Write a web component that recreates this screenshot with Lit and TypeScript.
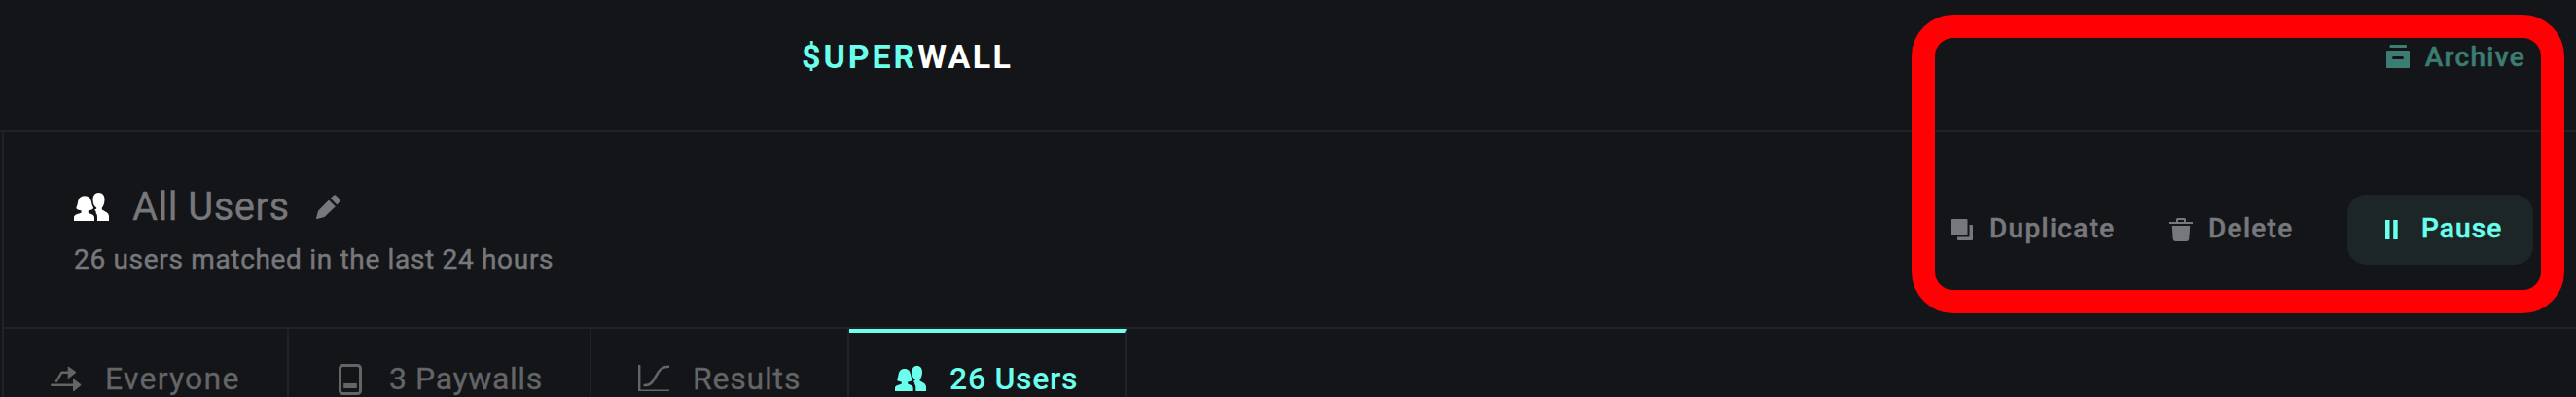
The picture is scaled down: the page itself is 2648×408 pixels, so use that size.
import { LitElement, html, css, svg } from 'lit'
import { customElement, property } from 'lit/decorators.js'

const icons = {
  users: svg`
    <path d="M11 3.2c4.400 0 6.700 3 7.200 7.400.3 2.700 1.800 4.200 1.800 5.200 0 1.500-3.200 2.400-5.200 2.500v2.500c2.700 1.400 6.200 1.900 6.200 4.700V29H0v-3.500c0-3.300 5-3.400 7.600-4.900v-2.300c-2-.1-5.200-1-5.200-2.500 0-1 1.200-2.400 1.500-5.200C4.400 6.200 6.700 3.200 11 3.200z" />
    <path d="M25.500 0c4 0 6 3 6 7.200 0 4-1.400 6.700-2.700 8.300v1.900c2.800 1.700 7.200 3 7.200 6.800V29H24v-4c0-2-.5-3-1.300-3.700v-1.900l-1.500-1.600 2-1.200v-1C21 14 19.500 11.500 19.500 7.200 19.500 3 21.500 0 25.500 0z" />
  `,
  pencil: svg`
    <path d="M13 5.500l6.800 6.800L8.500 23 .8 25q-1 .2-.8-.8l2-7.500z" />
    <path d="M14.800 3.800L17.700.9q1.400-1.400 2.800 0L24 4.600q1.400 1.400 0 2.800l-2.600 3z" />
  `,
  split: svg`
    <path d="M6 15.800L11.500 6.700H19" fill="none" stroke="currentColor" stroke-width="2.400" stroke-linecap="round" stroke-linejoin="round" />
    <path d="M1.200 19.700H24" fill="none" stroke="currentColor" stroke-width="2.400" stroke-linecap="round" />
    <path d="M18.200 1L26 6.500l-7.800 6.300zM23.500 13.700l7.700 6-7.700 6.300z" stroke="currentColor" stroke-width="1" stroke-linejoin="round" />
  `,
  phone: svg`
    <rect x="1.500" y="1.500" width="21" height="29" rx="3" fill="none" stroke="currentColor" stroke-width="3" />
    <rect x="5.200" y="20" width="13.600" height="5" />
  `,
  chart: svg`
    <path d="M1.200 0v26.600H32" fill="none" stroke="currentColor" stroke-width="2.400" />
    <path d="M5.500 21C21 22 15 1.500 32 1.800" fill="none" stroke="currentColor" stroke-width="2.600" />
  `,
  archive: svg`
    <rect x="3.500" width="17.500" height="3" rx="1" />
    <path fill-rule="evenodd" d="M1 6h22q1 0 1 1v16q0 1-1 1H1q-1 0-1-1V7q0-1 1-1zM7.500 12q-1.500 0-1.500 1.500T7.500 15h9q1.500 0 1.500-1.500T16.500 12z" />
  `,
  copy: svg`
    <rect width="16.500" height="16.500" rx="1" />
    <path d="M18.500 6H21q1 0 1 1v14q0 1-1 1H7q-1 0-1-1v-2.500h11.500q1 0 1-1z" />
  `,
  trash: svg`
    <path fill-rule="evenodd" d="M0 4h7V1.500Q7 0 8.500 0h7Q17 0 17 1.500V4h7v2H0zM9 2v2h6V2z" />
    <path d="M2.800 8h18.400l-.9 13.500Q20 24 17.700 24H6.300Q4 24 3.700 21.500z" />
  `,
  pause: svg`<path d="M0 0h4.500v20H0zM8.200 0h4.500v20H8.200z" />`,
}

type IconName = keyof typeof icons

@customElement('sw-icon')
export class SwIcon extends LitElement {
  static styles = css`
    :host {
      display: block;
      flex: none;
    }
    svg {
      display: block;
      width: 100%;
      height: 100%;
      fill: currentColor;
    }
  `

  @property() name: IconName = 'users'
  @property() box = '0 0 36 29'

  render() {
    return html`<svg viewBox=${this.box} aria-hidden="true">
      ${icons[this.name]}
    </svg>`
  }
}

@customElement('app-root')
export class AppRoot extends LitElement {
  static styles = css`
    :host {
      --bg: #141519;
      --line: #202226;
      --fg-mid: #77787b;
      --fg-tab: #646567;
      --accent: #6bffed;
      display: block;
      position: relative;
      box-sizing: border-box;
      height: 408px;
      overflow: hidden;
      background: var(--bg);
      color: var(--fg-mid);
      font-family: Roboto, 'Liberation Sans', sans-serif;
      font-size: 28px;
      font-weight: 500;
      line-height: 1;
      white-space: nowrap;
    }
    .topbar {
      display: flex;
      align-items: center;
      justify-content: space-between;
      box-sizing: border-box;
      height: 136px;
      padding: 0 52px 18px 824px;
      border-bottom: 2px solid var(--line);
    }
    .logo {
      color: #fff;
      font-size: 34px;
      font-weight: 700;
      letter-spacing: 2.3px;
    }
    .logo b {
      font-weight: inherit;
      color: var(--accent);
      letter-spacing: 2.9px;
    }
    .action {
      display: flex;
      align-items: center;
      letter-spacing: 1.1px;
      -webkit-text-stroke: 0.5px;
    }
    .action span {
      margin-top: -3px;
    }
    .archive {
      gap: 16px;
      color: #3b7d73;
      letter-spacing: 1.3px;
    }
    .archive span {
      margin-top: 1px;
    }
    .main {
      margin-left: 2px;
      border-left: 2px solid var(--line);
    }
    .header {
      display: flex;
      justify-content: space-between;
      box-sizing: border-box;
      height: 202px;
      padding: 57px 44px 0 72px;
      border-bottom: 2px solid var(--line);
    }
    .title {
      display: flex;
      align-items: center;
      height: 38px;
      font-size: 40px;
      font-weight: 400;
      -webkit-text-stroke: 0.3px;
    }
    .title-icon {
      color: #fff;
    }
    .name {
      width: 160px;
      margin: 1px 29px 0 24px;
      letter-spacing: 0.45px;
    }
    .subtitle {
      margin-top: 22px;
      font-weight: 400;
      letter-spacing: 0.68px;
      -webkit-text-stroke: 0.5px;
    }
    .actions {
      display: flex;
      align-items: center;
      height: 72px;
      margin-top: 7px;
    }
    .duplicate {
      gap: 17px;
      width: 224px;
      letter-spacing: 1.3px;
    }
    .delete {
      gap: 16px;
      width: 183px;
      letter-spacing: 1.3px;
    }
    .pause {
      box-sizing: border-box;
      gap: 24px;
      width: 191px;
      height: 72px;
      padding-left: 39px;
      border-radius: 19px;
      background: #1c2627;
      color: var(--accent);
    }
    .tabs {
      display: flex;
      height: 70px;
    }
    .tab {
      display: flex;
      box-sizing: border-box;
      padding-top: 36px;
      border-right: 2px solid var(--line);
      color: var(--fg-tab);
      font-size: 32px;
      font-weight: 400;
      -webkit-text-stroke: 0.3px;
    }
    .tab span {
      margin-top: -1px;
    }
    .tab.active {
      padding-top: 32px;
      border-top: 4px solid var(--accent);
      color: var(--accent);
      font-weight: 500;
      letter-spacing: 0.7px;
      -webkit-text-stroke: 0;
    }
    .everyone {
      width: 293px;
      padding-left: 48px;
      gap: 24px;
      letter-spacing: 1.2px;
    }
    .paywalls {
      width: 311px;
      padding-left: 51px;
      gap: 28px;
      letter-spacing: 0.6px;
    }
    .results {
      width: 265px;
      padding-left: 48px;
      gap: 24px;
      letter-spacing: 0.8px;
    }
    .users {
      width: 285px;
      padding-left: 47px;
      gap: 24px;
    }
    .i36 { width: 36px; height: 29px; }
    .i25 { width: 25px; height: 25px; }
    .i24 { width: 24px; height: 24px; }
    .i22 { width: 22px; height: 22px; }
    .i32 { width: 32px; height: 28px; }
    .bars { width: 13px; height: 20px; }
    .device { width: 24px; height: 32px; }
    .small-users { width: 32px; height: 26px; margin-top: 2px; }
    .highlight {
      position: absolute;
      top: 15px;
      left: 1965px;
      box-sizing: border-box;
      width: 671px;
      height: 307px;
      border: 24px solid #ff0004;
      border-radius: 43px;
      pointer-events: none;
    }
  `

  render() {
    return html`
      <div class="topbar">
        <div class="logo"><b>$UPER</b>WALL</div>
        <div class="action archive">
          <sw-icon class="i24" name="archive" box="0 0 24 24"></sw-icon>
          <span>Archive</span>
        </div>
      </div>
      <div class="main">
        <div class="header">
          <div>
            <div class="title">
              <sw-icon class="i36 title-icon" name="users"></sw-icon>
              <span class="name">All Users</span>
              <sw-icon class="i25" name="pencil" box="0 0 25 25"></sw-icon>
            </div>
            <div class="subtitle">26 users matched in the last 24 hours</div>
          </div>
          <div class="actions">
            <div class="action duplicate">
              <sw-icon class="i22" name="copy" box="0 0 22 22"></sw-icon>
              <span>Duplicate</span>
            </div>
            <div class="action delete">
              <sw-icon class="i24" name="trash" box="0 0 24 24"></sw-icon>
              <span>Delete</span>
            </div>
            <div class="action pause">
              <sw-icon class="bars" name="pause" box="0 0 13 20"></sw-icon>
              <span>Pause</span>
            </div>
          </div>
        </div>
        <div class="tabs">
          <div class="tab everyone">
            <sw-icon class="i32" name="split" box="0 -2 32 28"></sw-icon>
            <span>Everyone</span>
          </div>
          <div class="tab paywalls">
            <sw-icon class="device" name="phone" box="0 0 24 32"></sw-icon>
            <span>3 Paywalls</span>
          </div>
          <div class="tab results">
            <sw-icon class="i32" name="chart" box="0 -1 32 28"></sw-icon>
            <span>Results</span>
          </div>
          <div class="tab users active">
            <sw-icon class="small-users" name="users"></sw-icon>
            <span>26 Users</span>
          </div>
        </div>
      </div>
      <div class="highlight"></div>
    `
  }
}
